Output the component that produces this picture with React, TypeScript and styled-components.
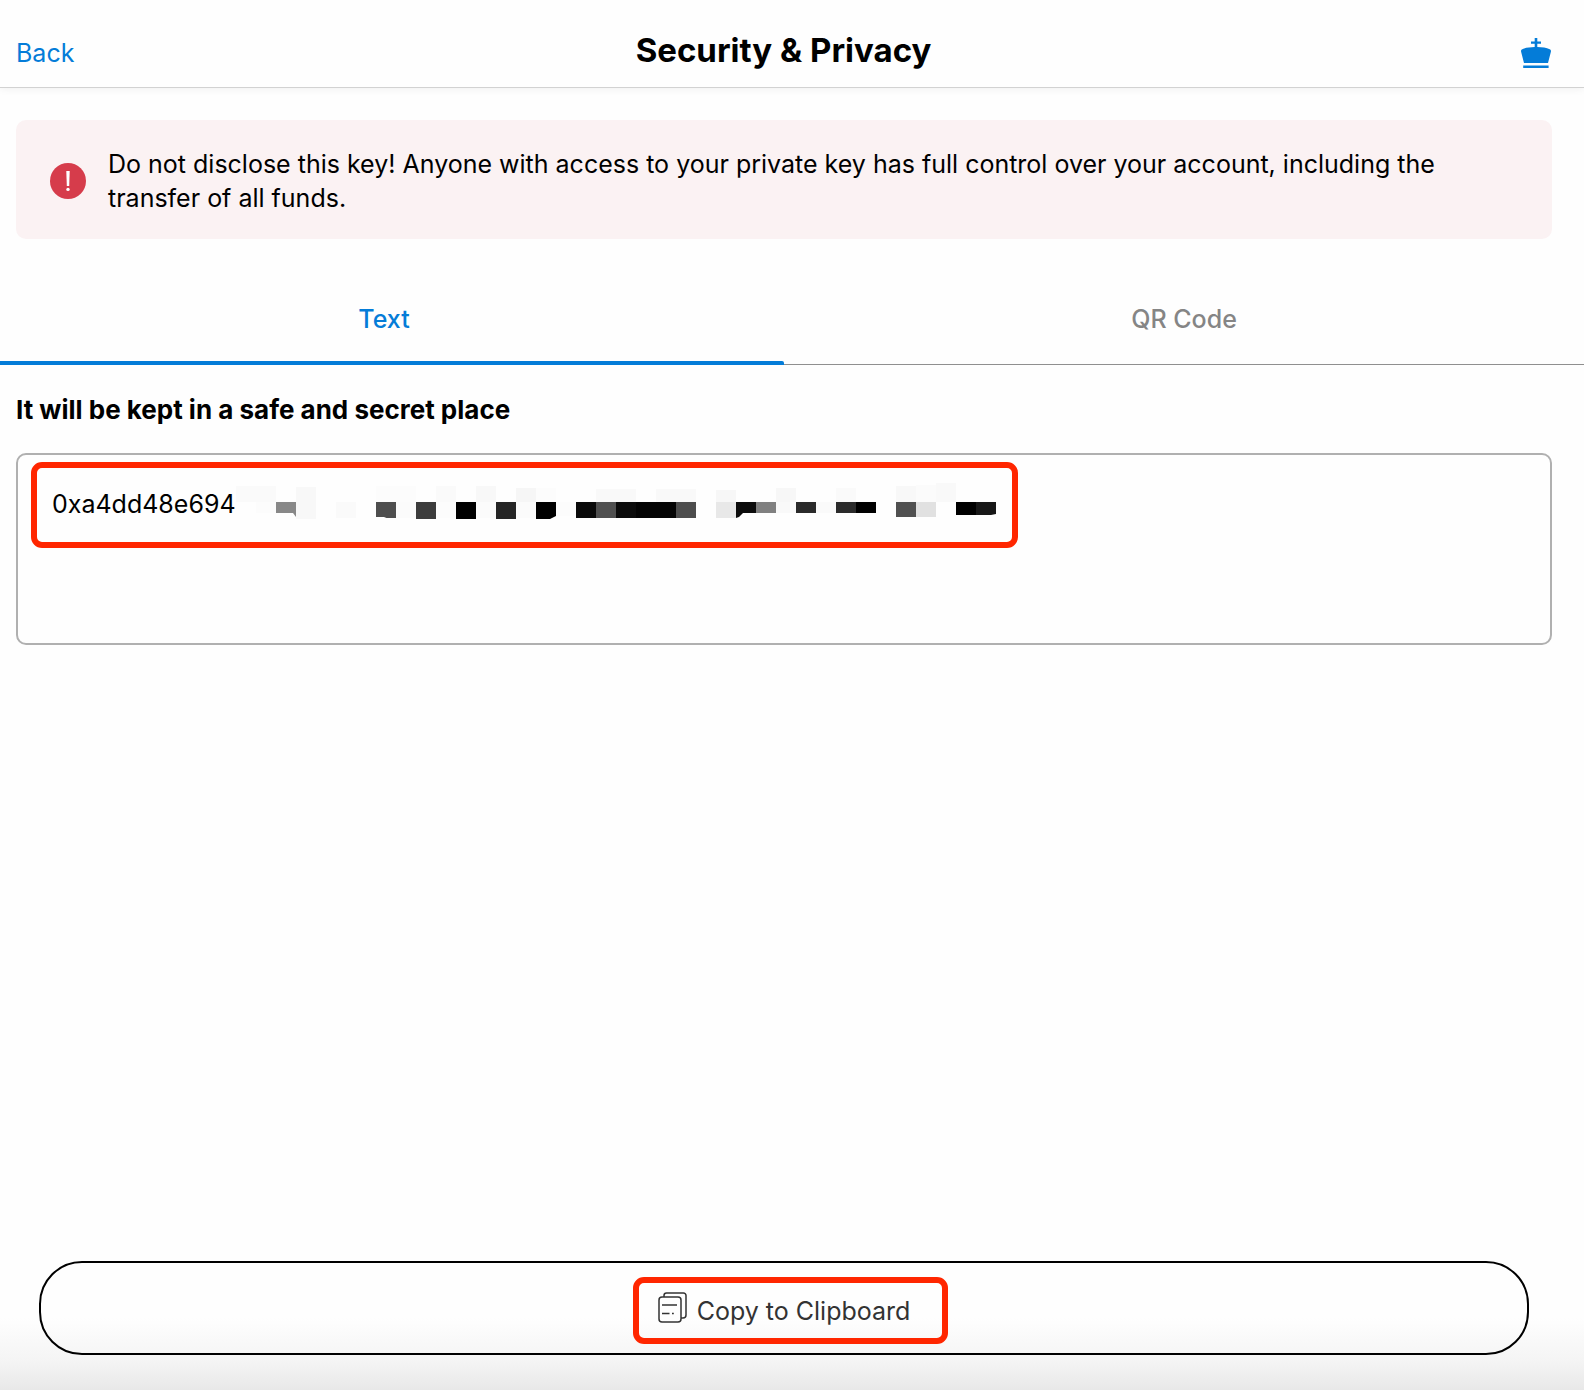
import React, { useState } from "react";
import styled, { createGlobalStyle } from "styled-components";

const GlobalStyle = createGlobalStyle`
  *, *::before, *::after { box-sizing: border-box; }
  body {
    margin: 0;
    background: #fefefe;
    color: #000;
    font-family: Inter, "Liberation Sans", sans-serif;
    font-size: 25px;
    line-height: 34px;
  }
  button, textarea { font: inherit; color: inherit; }
`;

const Page = styled.div`
  min-height: 100vh;
  display: flex;
  flex-direction: column;
  background: linear-gradient(to top, #e8e8e8 0, #f4f4f4 28px, #fefefe 72px);
`;

const Header = styled.header`
  display: grid;
  grid-template-columns: 1fr auto 1fr;
  align-items: center;
  height: 88px;
  padding: 18px 33px 0 16px;
  border-bottom: 1px solid #d2d2d2;
  box-shadow: 0 1px 8px rgba(0, 0, 0, 0.06);
`;

const BackButton = styled.button`
  justify-self: start;
  padding: 0;
  border: 0;
  background: none;
  color: #047cd8;
  cursor: pointer;
`;

const Title = styled.h1`
  margin: 0;
  padding-bottom: 6px;
  font-size: 33px;
  line-height: 40px;
  font-weight: 700;
`;

const CrownButton = styled.button`
  justify-self: end;
  display: flex;
  padding: 0;
  border: 0;
  background: none;
  color: #047cd8;
  cursor: pointer;
`;

const Alert = styled.div`
  display: flex;
  align-items: center;
  gap: 22px;
  margin: 32px 32px 0 16px;
  padding: 27px 34px 24px;
  border-radius: 10px;
  background: #fbf2f3;

  svg { flex: none; }
`;

const AlertText = styled.p`
  margin: 0;
`;

const Tabs = styled.div`
  display: flex;
  height: 91px;
  margin-top: 35px;
  border-bottom: 1px solid #8f8f8f;
`;

const Tab = styled.button<{ $active: boolean }>`
  position: relative;
  flex: none;
  width: calc(50% - 8px);
  padding: 0 16px 0 0;
  border: 0;
  background: none;
  font-weight: 500;
  color: ${(p) => (p.$active ? "#047cd8" : "#858585")};
  cursor: pointer;

  &:last-child {
    flex: 1;
    padding: 0;
  }

  &::after {
    content: "";
    display: ${(p) => (p.$active ? "block" : "none")};
    position: absolute;
    left: 0;
    right: 0;
    bottom: -1px;
    height: 4px;
    border-radius: 0 2px 0 0;
    background: #047cd8;
  }
`;

const KeySection = styled.section`
  margin: 28px 32px 0 16px;
`;

const KeyLabel = styled.label`
  display: block;
  margin-bottom: 26px;
  font-size: 26px;
  font-weight: 700;
`;

const KeyField = styled.div`
  position: relative;
`;

const KeyText = styled.textarea`
  display: block;
  width: 100%;
  height: 192px;
  padding: 32px 34px;
  border: 2px solid #b0b0b0;
  border-radius: 10px;
  outline: 0;
  background: transparent;
  resize: none;
`;

const Mosaic = styled.svg`
  position: absolute;
  top: 27px;
  left: 219px;
`;

const Highlight = styled.span<{ $inset: string }>`
  position: absolute;
  inset: ${(p) => p.$inset};
  border: 6px solid #ff2600;
  border-radius: 11px;
  pointer-events: none;
`;

const KeyHighlight = styled(Highlight)`
  width: 987px;
  height: 86px;
`;

const Footer = styled.footer`
  margin-top: auto;
  padding: 32px 55px 35px 39px;
`;

const CopyButton = styled.button`
  display: flex;
  justify-content: center;
  align-items: center;
  width: 100%;
  height: 94px;
  border: 2px solid #000;
  border-radius: 43px;
  background: none;
  color: #333;
  cursor: pointer;
`;

const CopyContent = styled.span`
  position: relative;
  display: flex;
  align-items: center;
  gap: 10px;
  padding-top: 6px;

  svg { margin-bottom: 8px; }
`;

type Cell = [column: number, span: number, top: number, bottom: number, fill: string];

const cells: Cell[] = [
  [0, 2, 6, 22, "#fafafa"], [1, 1, 22, 33, "#fcfcfc"], [3, 1, 7, 39, "#f8f8f8"],
  [5, 1, 22, 38, "#fafafa"], [7, 2, 6, 22, "#fcfcfc"], [8, 1, 22, 38, "#fbfbfb"],
  [10, 1, 6, 22, "#fafafa"], [10, 1, 22, 38, "#fcfcfc"], [12, 1, 6, 22, "#f8f8f8"],
  [12, 1, 22, 38, "#fbfbfb"], [14, 1, 8, 22, "#f6f6f6"], [14, 1, 22, 38, "#fbfbfb"],
  [15, 1, 8, 22, "#fcfcfc"], [16, 1, 22, 36, "#fcfcfc"], [18, 2, 9, 22, "#f9f9f9"],
  [21, 2, 9, 22, "#f9f9f9"], [24, 1, 10, 22, "#f7f7f7"], [27, 1, 8, 22, "#f7f7f7"],
  [27, 1, 22, 33, "#f9f9f9"], [29, 1, 22, 33, "#fafafa"], [30, 1, 8, 22, "#fafafa"],
  [33, 1, 6, 22, "#f8f8f8"], [34, 1, 5, 22, "#fbfbfb"], [35, 1, 3, 22, "#f9f9f9"],
  [7, 1, 22, 38, "#4e4e4e"], [9, 1, 22, 39, "#3c3c3c"],
  [11, 1, 22, 39, "#000"], [13, 1, 22, 39, "#252525"],
  [17, 1, 22, 38, "#0a0a0a"], [18, 1, 22, 38, "#505050"], [19, 1, 22, 38, "#0c0c0c"],
  [20, 2, 22, 38, "#040404"], [22, 1, 22, 38, "#4d4d4d"], [24, 1, 22, 38, "#e8e8e8"],
  [26, 1, 22, 33, "#808080"], [28, 1, 22, 33, "#2a2a2a"],
  [30, 1, 22, 33, "#2b2b2b"], [31, 1, 22, 33, "#000"], [33, 1, 22, 37, "#505050"],
  [34, 1, 22, 37, "#e1e1e1"], [36, 1, 22, 35, "#000"],
];

function KeyMosaic() {
  return (
    <Mosaic width="761" height="42" viewBox="-1 0 761 42" aria-hidden="true">
      <rect x="-1" y="0" width="761" height="42" fill="#fefefe" />
      {cells.map(([column, span, top, bottom, fill], i) => (
        <rect key={i} x={column * 20} y={top} width={span * 20} height={bottom - top} fill={fill} />
      ))}
      <path d="M40 22h20v15l-3-4H40z" fill="#888" />
      <path d="M140 39v-2h8l5 2z" fill="#fefefe" />
      <path d="M300 22h20v14l-6 3h-14z" fill="#000" />
      <path d="M500 22h20v11h-13l-4 4-3 1z" fill="#0c0c0c" />
      <path d="M740 22h20v12l-5 1h-15z" fill="#171717" />
    </Mosaic>
  );
}

function CrownIcon() {
  return (
    <svg width="30" height="30" viewBox="0 0 30 30" fill="currentColor" aria-hidden="true">
      <path d="M13.7 0h2.6v3.6H20v2.200h-3.700v3.200c4.800.1 9.300.7 12.400 2.200 1 .5 1.500 1.400 1.200 2.500L27 25H3L.1 13.700c-.3-1.100.2-2 1.200-2.500C4.400 9.700 8.900 9.100 13.700 9V5.800H10V3.600h3.700z" />
      <path d="M2.200 27.500h25.400V30H2.200z" />
    </svg>
  );
}

function WarningIcon() {
  return (
    <svg width="36" height="36" viewBox="0 0 36 36" aria-hidden="true">
      <circle cx="18" cy="18" r="18" fill="#d63c4b" />
      <path d="M16.300 8h3.400l-.5 15h-2.400z" fill="#fff" />
      <circle cx="18" cy="26.400" r="1.700" fill="#fff" />
    </svg>
  );
}

function CopyIcon() {
  return (
    <svg width="29" height="31" viewBox="0 0 29 31" fill="none" stroke="currentColor" strokeWidth="1.500" aria-hidden="true">
      <rect x="1" y="5" width="22" height="25" rx="3" />
      <path d="M6 5V3.500A2.500 2.500 0 0 1 8.500 1h17A2.500 2.500 0 0 1 28 3.500V23a3 3 0 0 1-3 3h-2" />
      <path d="M4 13h15M4 21.500h7.500M14 21.500h1.800" />
    </svg>
  );
}

const tabs = ["Text", "QR Code"];

export default function App() {
  const [active, setActive] = useState("Text");

  return (
    <>
      <GlobalStyle />
      <Page>
        <Header>
          <BackButton type="button">Back</BackButton>
          <Title>Security &amp; Privacy</Title>
          <CrownButton type="button" aria-label="Premium">
            <CrownIcon />
          </CrownButton>
        </Header>

        <Alert role="alert">
          <WarningIcon />
          <AlertText>
            Do not disclose this key! Anyone with access to your private key has full control over
            your account, including the transfer of all funds.
          </AlertText>
        </Alert>

        <Tabs role="tablist">
          {tabs.map((name) => (
            <Tab
              key={name}
              type="button"
              role="tab"
              aria-selected={active === name}
              $active={active === name}
              onClick={() => setActive(name)}
            >
              {name}
            </Tab>
          ))}
        </Tabs>

        <KeySection>
          <KeyLabel htmlFor="private-key">It will be kept in a safe and secret place</KeyLabel>
          <KeyField>
            <KeyText id="private-key" readOnly value="0xa4dd48e694" />
            <KeyMosaic />
            <KeyHighlight $inset="9px auto auto 15px" />
          </KeyField>
        </KeySection>

        <Footer>
          <CopyButton type="button">
            <CopyContent>
              <CopyIcon />
              Copy to Clipboard
              <Highlight $inset="-9px -38px -13px -25px" />
            </CopyContent>
          </CopyButton>
        </Footer>
      </Page>
    </>
  );
}
